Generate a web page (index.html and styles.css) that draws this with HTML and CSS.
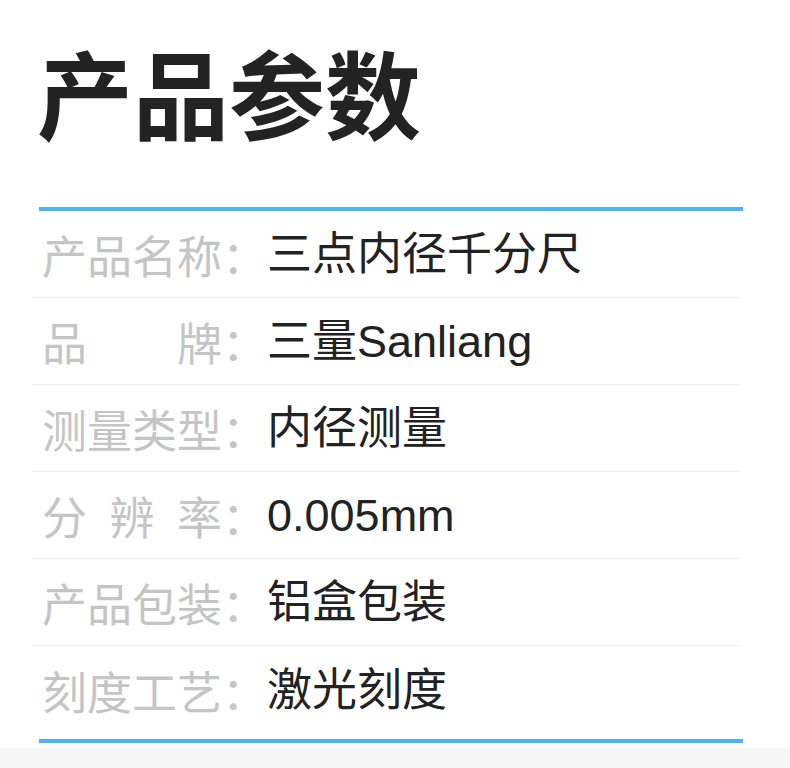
FILE: index.html
```html
<!DOCTYPE html>
<html lang="zh-CN">
<head>
  <meta charset="UTF-8" />
  <meta name="viewport" content="width=device-width, initial-scale=1.0" />
  <title>产品参数</title>
  <link rel="stylesheet" href="styles.css">
</head>
<body>

  <div class="page">
    <div class="header">
      <h1>产品参数</h1>
    </div>

    <!-- 参数列表 -->
    <div class="params">
      <div class="rows">
        <div class="row">
          <span class="label">产品名称</span><span class="colon">：</span>
          <span class="value">三点内径千分尺</span>
        </div>
        <div class="row">
          <span class="label">品 牌</span><span class="colon">：</span>
          <span class="value">三量Sanliang</span>
        </div>
        <div class="row">
          <span class="label">测量类型</span><span class="colon">：</span>
          <span class="value">内径测量</span>
        </div>
        <div class="row">
          <span class="label">分 辨 率</span><span class="colon">：</span>
          <span class="value">0.005mm</span>
        </div>
        <div class="row">
          <span class="label">产品包装</span><span class="colon">：</span>
          <span class="value">铝盒包装</span>
        </div>
        <div class="row last">
          <span class="label">刻度工艺</span><span class="colon">：</span>
          <span class="value">激光刻度</span>
        </div>
      </div>
    </div>

    <div class="bottom"></div>
  </div>

</body>
</html>
```

FILE: styles.css
```css
body {
  margin: 0;
  background: #fff;
  font-family: "Noto Sans CJK SC", "Noto Sans", sans-serif;
  color: #222;
}

.page {
  width: 790px;
  height: 768px;
  overflow: hidden;
}

.header {
  height: 207px;
  box-sizing: border-box;
  padding: 43px 0 0 37px;
}

.header h1 {
  margin: 0;
  font-size: 96px;
  line-height: 96px;
  font-weight: 700;
  color: #232323;
}

.params {
  margin: 0 47px 0 39px;
  border-top: 4px solid #4db1fb;
  border-bottom: 4px solid #4db1fb;
}

.rows {
  margin: 0 3px 0 -7px;
  padding-bottom: 5px;
}

.row {
  height: 86px;
  display: flex;
  align-items: center;
  padding-left: 10px;
  border-bottom: 1px solid #f1f1f1;
  font-size: 45px;
  line-height: 1;
}

.row.last {
  height: 88px;
  border-bottom: none;
}

.label {
  display: inline-block;
  width: 4em;
  text-align: justify;
  text-align-last: justify;
  color: #c5c5c5;
}

.colon {
  color: #c5c5c5;
}

.value {
  color: #222;
  font-family: "Liberation Sans", "Noto Sans CJK SC", sans-serif;
}

.bottom {
  height: 21px;
  margin-top: 5px;
  background: #f7f7f7;
}
```
